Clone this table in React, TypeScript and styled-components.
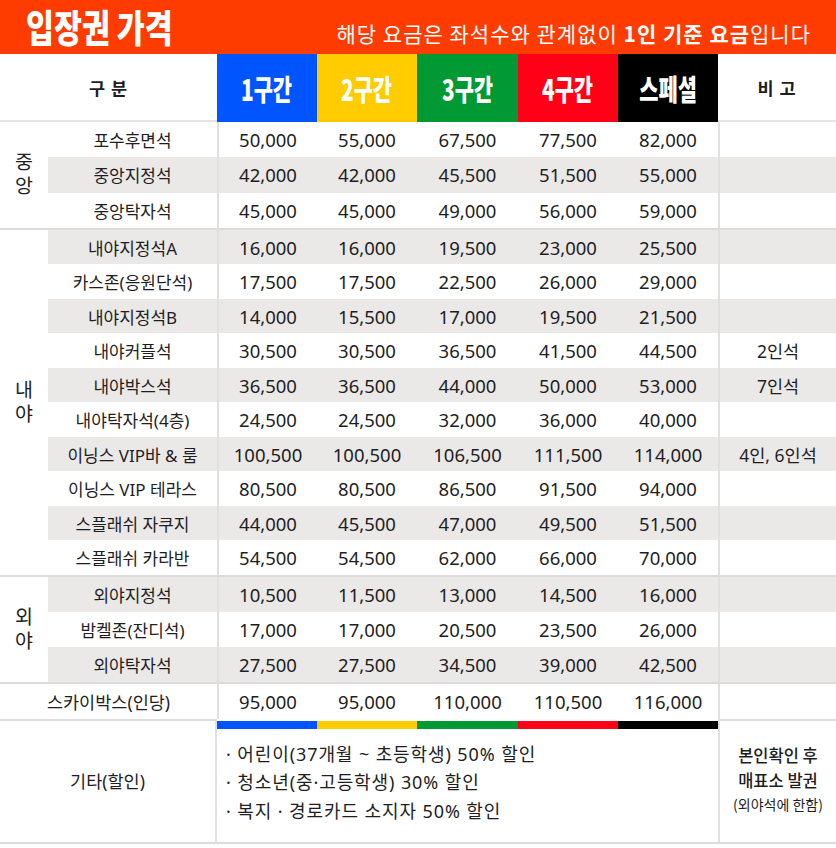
import styled, { createGlobalStyle } from "styled-components";

const GlobalStyle = createGlobalStyle`
  body {
    margin: 0;
    background: #fff;
    font-family: 'Noto Sans', 'Noto Sans CJK KR', sans-serif;
    color: #1e1e1e;
  }
`

const COLS = '169px 100px 100px 101px 100px 100px 118px'
const LINE = '#dcdcdc'
const SHADE = '#ebe8e8'

const zones = [
  { label: '1구간', color: '#0055ff', width: 100 },
  { label: '2구간', color: '#ffcc00', width: 100 },
  { label: '3구간', color: '#009933', width: 101 },
  { label: '4구간', color: '#ff0016', width: 100 },
  { label: '스페셜', color: '#000000', width: 100 },
]

type Seat = { name: string; prices: string[]; note?: string }
type Group = { name: string; rowHeight: number; seats: Seat[] }

const groups: Group[] = [
  {
    name: '중 앙',
    rowHeight: 35.33,
    seats: [
      { name: '포수후면석', prices: ['50,000', '55,000', '67,500', '77,500', '82,000'] },
      { name: '중앙지정석', prices: ['42,000', '42,000', '45,500', '51,500', '55,000'] },
      { name: '중앙탁자석', prices: ['45,000', '45,000', '49,000', '56,000', '59,000'] },
    ],
  },
  {
    name: '내 야',
    rowHeight: 34.5,
    seats: [
      { name: '내야지정석A', prices: ['16,000', '16,000', '19,500', '23,000', '25,500'] },
      { name: '카스존(응원단석)', prices: ['17,500', '17,500', '22,500', '26,000', '29,000'] },
      { name: '내야지정석B', prices: ['14,000', '15,500', '17,000', '19,500', '21,500'] },
      { name: '내야커플석', prices: ['30,500', '30,500', '36,500', '41,500', '44,500'], note: '2인석' },
      { name: '내야박스석', prices: ['36,500', '36,500', '44,000', '50,000', '53,000'], note: '7인석' },
      { name: '내야탁자석(4층)', prices: ['24,500', '24,500', '32,000', '36,000', '40,000'] },
      { name: '이닝스 VIP바 & 룸', prices: ['100,500', '100,500', '106,500', '111,500', '114,000'], note: '4인, 6인석' },
      { name: '이닝스 VIP 테라스', prices: ['80,500', '80,500', '86,500', '91,500', '94,000'] },
      { name: '스플래쉬 자쿠지', prices: ['44,000', '45,500', '47,000', '49,500', '51,500'] },
      { name: '스플래쉬 카라반', prices: ['54,500', '54,500', '62,000', '66,000', '70,000'] },
    ],
  },
  {
    name: '외 야',
    rowHeight: 35,
    seats: [
      { name: '외야지정석', prices: ['10,500', '11,500', '13,000', '14,500', '16,000'] },
      { name: '밤켈존(잔디석)', prices: ['17,000', '17,000', '20,500', '23,500', '26,000'] },
      { name: '외야탁자석', prices: ['27,500', '27,500', '34,500', '39,000', '42,500'] },
    ],
  },
]

const skybox = ['95,000', '95,000', '110,000', '110,500', '116,000']

const discounts = [
  '· 어린이(37개월 ~ 초등학생) 50% 할인',
  '· 청소년(중·고등학생) 30% 할인',
  '· 복지 · 경로카드 소지자 50% 할인',
]

const Page = styled.div`
  width: 836px;
`

const TitleBar = styled.header`
  height: 54px;
  background: #ff3c00;
  color: #fff;
  display: flex;
  align-items: center;
  justify-content: space-between;
  padding: 0 25px 0 26px;
  box-sizing: border-box;
`

const Title = styled.h1`
  margin: 0 0 2px;
  width: 220px;
  flex: none;
  font-family: 'Noto Sans CJK KR', sans-serif;
  font-size: 38px;
  font-weight: 900;
  line-height: 46px;
  white-space: nowrap;
  span {
    display: inline-block;
    transform: scaleX(0.8);
    transform-origin: left center;
  }
`

const Notice = styled.p`
  margin: 12px 0 0;
  font-family: 'Noto Sans CJK KR', sans-serif;
  font-size: 21px;
  letter-spacing: 1px;
  line-height: 26px;
  b {
    font-weight: 700;
  }
`

const HeadRow = styled.div`
  display: grid;
  grid-template-columns: 217px 100px 100px 101px 100px 100px 118px;
  height: 68px;
`

const HeadCell = styled.div`
  display: flex;
  align-items: center;
  justify-content: center;
  border-bottom: 2px solid #e4e4e4;
  font-family: 'Noto Sans CJK KR', sans-serif;
  font-size: 17.5px;
  font-weight: 700;
  letter-spacing: 1px;
`

const ZoneCell = styled.div<{ $color: string }>`
  display: flex;
  align-items: center;
  justify-content: center;
  background: ${p => p.$color};
  color: #fff;
  font-family: 'Noto Sans CJK KR', sans-serif;
  font-size: 29px;
  font-weight: 900;
  span {
    display: inline-block;
    transform: scaleX(0.72);
  }
`

const GroupBox = styled.section`
  display: flex;
  border-bottom: 2px solid ${LINE};
`

const GroupName = styled.div`
  width: 48px;
  flex: none;
  display: flex;
  align-items: center;
  justify-content: center;
  padding-bottom: 3px;
  box-sizing: border-box;
`

const GroupText = styled.span`
  width: 20px;
  text-align: center;
  font-family: 'Noto Sans CJK KR', sans-serif;
  font-size: 19.5px;
  line-height: 24px;
`

const GroupRows = styled.div`
  flex: 1;
  display: flex;
  flex-direction: column;
`

const Row = styled.div<{ $shade: boolean; $height: number }>`
  display: grid;
  grid-template-columns: ${COLS};
  height: ${p => p.$height}px;
  background: ${p => (p.$shade ? SHADE : 'transparent')};
`

const SkyRow = styled.div`
  display: grid;
  grid-template-columns: 217px 100px 100px 101px 100px 100px 118px;
  height: 35px;
`

const Cell = styled.div<{ $divided?: boolean; $size?: number }>`
  display: flex;
  align-items: center;
  justify-content: center;
  white-space: nowrap;
  font-size: ${p => p.$size ?? 17}px;
  border-left: ${p => (p.$divided ? '2px solid #e0e0e0' : '0')};
`

const Footer = styled.footer`
  display: grid;
  grid-template-columns: 217px 501px 118px;
  height: 123px;
  border-bottom: 2px solid ${LINE};
`

const FooterLabel = styled.div`
  display: flex;
  align-items: center;
  justify-content: center;
  border-top: 2px solid ${LINE};
  border-right: 2px solid #e0e0e0;
  font-size: 17.5px;
  padding-bottom: 2px;
`

const FooterBody = styled.div`
  display: flex;
  flex-direction: column;
  padding-top: 2px;
`

const ColorBar = styled.div`
  display: flex;
  height: 8px;
`

const Segment = styled.div<{ $color: string; $width: number }>`
  width: ${p => p.$width}px;
  background: ${p => p.$color};
`

const DiscountList = styled.ul`
  flex: 1;
  margin: 0;
  padding: 0 0 6px 9px;
  list-style: none;
  display: flex;
  flex-direction: column;
  justify-content: center;
  font-size: 18px;
  letter-spacing: 0.9px;
  line-height: 28.5px;
`

const FooterNote = styled.div`
  display: flex;
  flex-direction: column;
  align-items: center;
  justify-content: center;
  border-top: 2px solid ${LINE};
  border-left: 2px solid #e0e0e0;
  font-family: 'Noto Sans CJK KR', sans-serif;
  padding-bottom: 4px;
`

const NoteLine = styled.div<{ $small?: boolean }>`
  font-size: ${p => (p.$small ? 14 : 16.5)}px;
  font-weight: ${p => (p.$small ? 400 : 500)};
  line-height: ${p => (p.$small ? 22 : 25)}px;
`

let rowIndex = 0

function PriceCells({ prices }: { prices: string[] }) {
  return (
    <>
      {prices.map((price, i) => (
        <Cell key={i} $divided={i === 0} $size={18.5}>
          {price}
        </Cell>
      ))}
    </>
  )
}

export default function App() {
  rowIndex = 0
  return (
    <Page>
      <GlobalStyle />
      <TitleBar>
        <Title>
          <span>입장권 가격</span>
        </Title>
        <Notice>
          해당 요금은 좌석수와 관계없이 <b>1인 기준 요금</b>입니다
        </Notice>
      </TitleBar>

      <HeadRow>
        <HeadCell>구 분</HeadCell>
        {zones.map(z => (
          <ZoneCell key={z.label} $color={z.color}>
            <span>{z.label}</span>
          </ZoneCell>
        ))}
        <HeadCell>비 고</HeadCell>
      </HeadRow>

      {groups.map(group => (
        <GroupBox key={group.name}>
          <GroupName>
            <GroupText>{group.name}</GroupText>
          </GroupName>
          <GroupRows>
            {group.seats.map(seat => {
              const shade = rowIndex++ % 2 === 1
              return (
                <Row key={seat.name} $shade={shade} $height={group.rowHeight}>
                  <Cell>{seat.name}</Cell>
                  <PriceCells prices={seat.prices} />
                  <Cell $divided $size={17.5}>{seat.note}</Cell>
                </Row>
              )
            })}
          </GroupRows>
        </GroupBox>
      ))}

      <SkyRow>
        <Cell $size={17.5}>스카이박스(인당)</Cell>
        <PriceCells prices={skybox} />
        <Cell $divided />
      </SkyRow>

      <Footer>
        <FooterLabel>기타(할인)</FooterLabel>
        <FooterBody>
          <ColorBar>
            {zones.map(z => (
              <Segment key={z.label} $color={z.color} $width={z.width} />
            ))}
          </ColorBar>
          <DiscountList>
            {discounts.map(d => (
              <li key={d}>{d}</li>
            ))}
          </DiscountList>
        </FooterBody>
        <FooterNote>
          <NoteLine>본인확인 후</NoteLine>
          <NoteLine>매표소 발권</NoteLine>
          <NoteLine $small>(외야석에 한함)</NoteLine>
        </FooterNote>
      </Footer>
    </Page>
  )
}
